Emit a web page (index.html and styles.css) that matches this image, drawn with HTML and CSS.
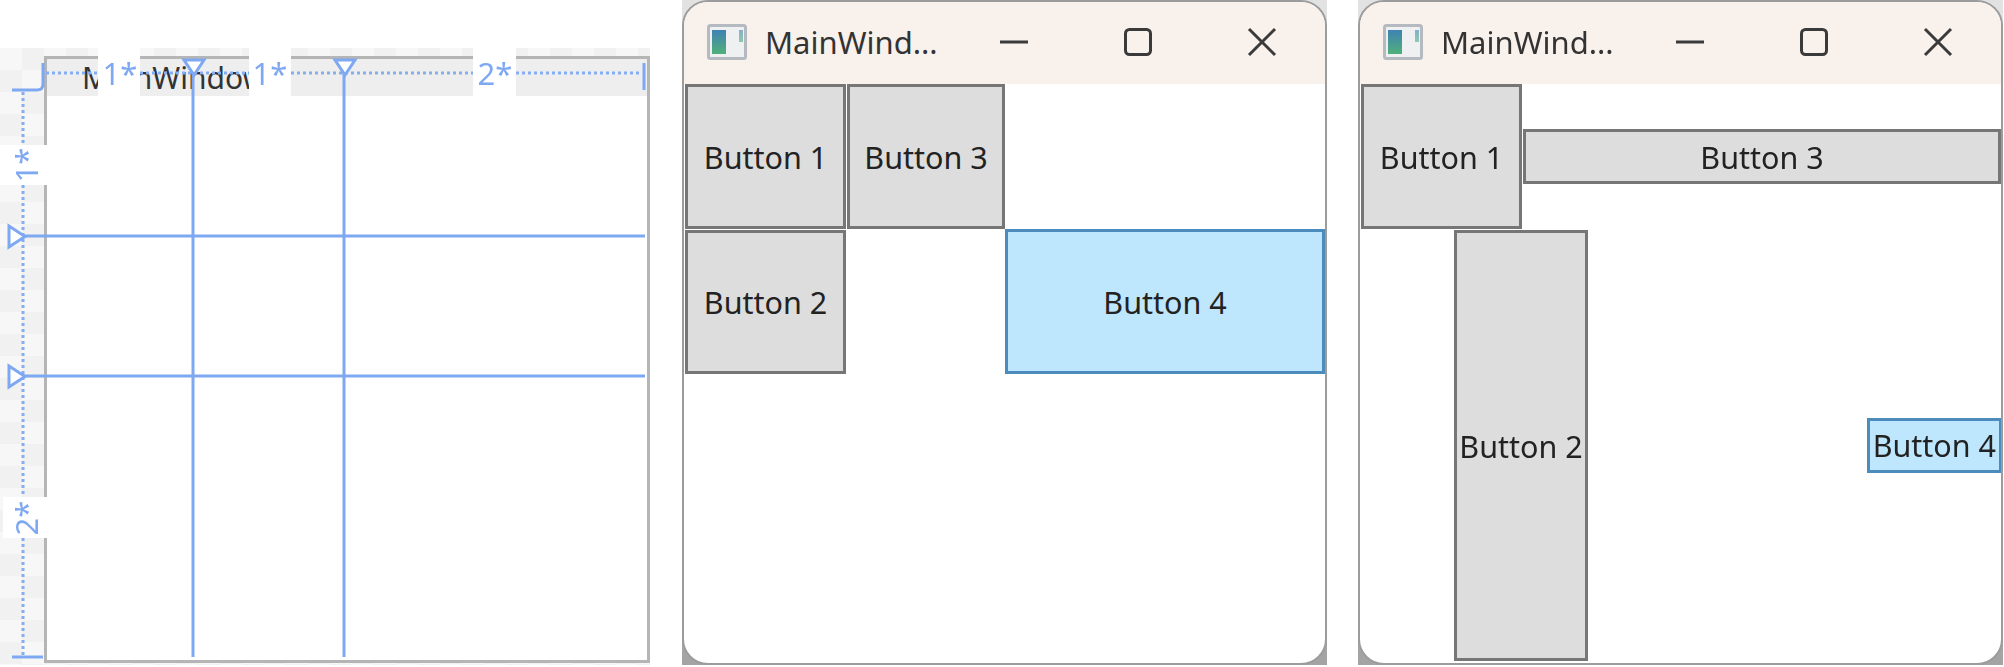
FILE: index.html
```html
<!DOCTYPE html>
<html lang="en">
<head>
    <meta charset="utf-8"/>
    <title>WPF Grid layout</title>
    <link rel="stylesheet" href="styles.css">
</head>
<body>
    <div class="desk">
        <!-- designer view with the grid guides -->
        <div class="designer">
            <div class="design-window">
                <div class="design-title">MainWindow</div>
            </div>
            <svg class="guides" viewBox="0 48 650 617">
                <rect class="label-bg" x="98" y="48" width="42" height="48"/>
                <rect class="label-bg" x="249" y="48" width="42" height="48"/>
                <rect class="label-bg" x="473" y="48" width="43" height="48"/>
                <rect class="label-bg" x="0" y="145" width="47" height="40"/>
                <rect class="label-bg" x="3" y="497" width="44" height="41"/>

                <path class="dots" d="M46 73H98M140 73H249M291 73H473M516 73H642"/>
                <path class="dots" d="M23 92V145M23 185V497M23 538V655"/>
                <path class="tick" d="M12 90H37Q43 90 43 84V63"/>
                <path class="tick" d="M644 63V90"/>
                <path class="tick" d="M12 657H43"/>

                <path class="guide" d="M193 72V657M344 72V657M24 236H645M24 376H645"/>
                <path class="marker" d="M184 60H204L194 75Z"/>
                <path class="marker" d="M335 60H355L345 75Z"/>
                <path class="marker" d="M9 226V247L25 236.500Z"/>
                <path class="marker" d="M9 366V387L25 376.500Z"/>

                <text class="size-label" x="120" y="85">1*</text>
                <text class="size-label" x="270" y="85">1*</text>
                <text class="size-label" x="495" y="85">2*</text>
                <text class="size-label" transform="translate(38 165) rotate(-90)">1*</text>
                <text class="size-label" transform="translate(38 518) rotate(-90)">2*</text>
            </svg>
        </div>

        <div class="frame">
            <div class="window">
                <div class="titlebar">
                    <svg class="app-icon" viewBox="0 0 40 36">
                        <defs>
                            <linearGradient id="iconfill" x1="0" y1="0" x2="0" y2="1">
                                <stop offset="0" stop-color="#3f82b4"/>
                                <stop offset="1" stop-color="#4fb07a"/>
                            </linearGradient>
                        </defs>
                        <rect x="1.500" y="1.500" width="37" height="33" rx="2" fill="#eef0f2" stroke="#b4babf" stroke-width="3"/>
                        <rect x="5" y="6" width="14" height="24" fill="url(#iconfill)"/>
                        <rect x="32" y="6" width="4" height="12" fill="url(#iconfill)" opacity="0.6"/>
                    </svg>
                    <span class="title">MainWind...</span>
                    <div class="caption">
                        <svg viewBox="0 0 28 28"><path d="M0 14H28"/></svg>
                        <svg viewBox="0 0 28 28"><rect x="1.500" y="1.500" width="25" height="25" rx="4"/></svg>
                        <svg viewBox="0 0 28 28"><path d="M1 1L27 27M27 1L1 27"/></svg>
                    </div>
                </div>
                <div class="grid">
                    <button class="btn">Button 1</button>
                    <button class="btn btn-next">Button 3</button>
                    <button class="btn btn-row2">Button 2</button>
                    <button class="btn btn-hot btn-row2-right">Button 4</button>
                </div>
            </div>
        </div>

        <div class="frame">
            <div class="window">
                <div class="titlebar">
                    <svg class="app-icon" viewBox="0 0 40 36">
                        <rect x="1.500" y="1.500" width="37" height="33" rx="2" fill="#eef0f2" stroke="#b4babf" stroke-width="3"/>
                        <rect x="5" y="6" width="14" height="24" fill="url(#iconfill)"/>
                        <rect x="32" y="6" width="4" height="12" fill="url(#iconfill)" opacity="0.6"/>
                    </svg>
                    <span class="title">MainWind...</span>
                    <div class="caption">
                        <svg viewBox="0 0 28 28"><path d="M0 14H28"/></svg>
                        <svg viewBox="0 0 28 28"><rect x="1.500" y="1.500" width="25" height="25" rx="4"/></svg>
                        <svg viewBox="0 0 28 28"><path d="M1 1L27 27M27 1L1 27"/></svg>
                    </div>
                </div>
                <div class="grid">
                    <button class="btn">Button 1</button>
                    <button class="btn btn-wide">Button 3</button>
                    <button class="btn btn-tall">Button 2</button>
                    <button class="btn btn-hot btn-small">Button 4</button>
                </div>
            </div>
        </div>
    </div>
</body>
</html>
```

FILE: styles.css
```css
body {
    margin: 0;
    background: #fff;
    font-family: "Noto Sans", "Open Sans", sans-serif;
    color: #222;
}
.desk {
    display: flex;
    align-items: flex-start;
    width: 2004px;
    height: 667px;
    overflow: hidden;
    filter: blur(0.6px);
}

/* designer */
.designer {
    position: relative;
    flex: none;
    width: 650px;
    height: 617px;
    margin-top: 48px;
    margin-right: 32px;
    background: repeating-conic-gradient(#f1f1f1 0 25%, #f7f7f7 0 50%) 0 0 / 44px 44px;
}
.design-window {
    position: absolute;
    left: 44px;
    top: 8px;
    width: 606px;
    height: 607px;
    box-sizing: border-box;
    border: 3px solid #b5b5b5;
    background: #fff;
}
.design-title {
    height: 37px;
    padding-left: 35px;
    background: #eeeeee;
    font-size: 30px;
    line-height: 37px;
    color: #333;
}
.guides {
    position: absolute;
    left: 0;
    top: 0;
    width: 650px;
    height: 617px;
}
.label-bg {
    fill: #fff;
}
.dots {
    fill: none;
    stroke: #86adf2;
    stroke-width: 3;
    stroke-dasharray: 3 3;
}
.tick {
    fill: none;
    stroke: #7fa8f2;
    stroke-width: 3;
}
.guide {
    fill: none;
    stroke: #7fa8f2;
    stroke-width: 3;
}
.marker {
    fill: #fff;
    stroke: #7fa8f2;
    stroke-width: 3;
}
.size-label {
    fill: #7fa8f2;
    font-size: 31px;
    text-anchor: middle;
}

/* windows */
.frame {
    flex: none;
    width: 645px;
    height: 665px;
    margin-right: 31px;
    background: linear-gradient(#e2e2e2 0 50%, #a4a4a4 50%);
}
.window {
    height: 100%;
    box-sizing: border-box;
    border: 2px solid #9c9c9c;
    border-radius: 26px;
    background: #fff;
    overflow: hidden;
}
.titlebar {
    display: flex;
    align-items: center;
    height: 82px;
    box-sizing: border-box;
    padding: 0 49px 2px 23px;
    background: #f9f1ec;
}
.app-icon {
    flex: none;
    width: 40px;
    height: 36px;
}
.title {
    margin-left: 18px;
    font-size: 31px;
    color: #333;
}
.caption {
    display: flex;
    gap: 96px;
    margin-left: auto;
}
.caption svg {
    width: 28px;
    height: 28px;
    fill: none;
    stroke: #3a3a3a;
    stroke-width: 3;
    overflow: visible;
}

/* grid 1* 1* 2* in both directions */
.grid {
    display: grid;
    grid-template-columns: 161px 159px 321px;
    grid-template-rows: 145px 145px 287px;
    padding-left: 1px;
}
.btn {
    min-width: 0;
    margin: 0;
    padding: 0 2px;
    box-sizing: border-box;
    border: 3px solid #767676;
    background: #dddddd;
    font-family: inherit;
    font-size: 30.500px;
    color: #222;
}
.btn-hot {
    border-color: #4c8cbc;
    background: #bee6fd;
}
.btn-next {
    margin-left: 1px;
}
.btn-row2 {
    grid-column: 1;
    grid-row: 2;
    margin-top: 1px;
}
.btn-row2-right {
    grid-column: 3;
    grid-row: 2;
    margin-right: 1px;
}
.btn-wide {
    grid-column: 2 / 4;
    align-self: center;
    height: 55px;
    margin-left: 1px;
    margin-right: 1px;
}
.btn-tall {
    grid-column: 1 / 3;
    grid-row: 2 / 4;
    justify-self: center;
    margin-top: 1px;
}
.btn-small {
    grid-column: 3;
    grid-row: 2 / 4;
    justify-self: end;
    align-self: center;
    height: 55px;
    padding: 0 3px;
}
```
